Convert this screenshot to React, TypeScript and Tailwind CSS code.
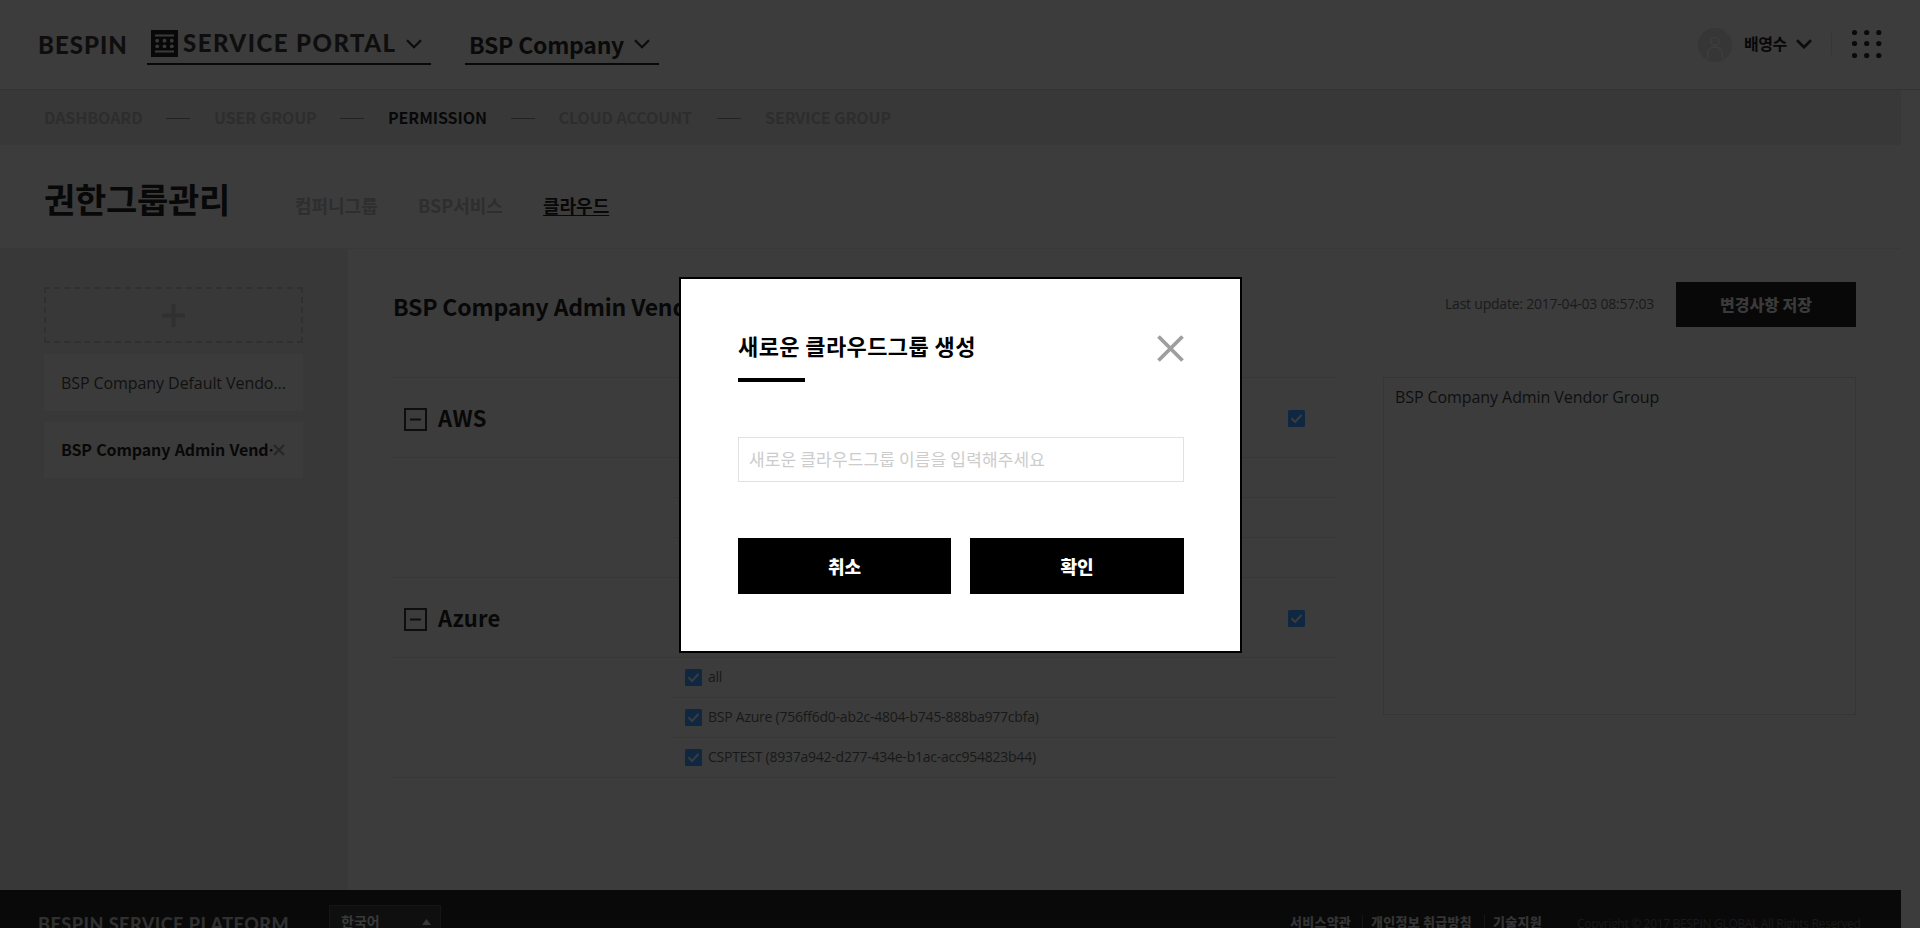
import React from "react";

const KR = "font-['Noto_Sans_CJK_KR',sans-serif]";
const OPEN = "font-['Open_Sans','Noto_Sans_CJK_KR',sans-serif]";

function Chevron({ className, w = 2.2 }: { className?: string; w?: number }) {
  return (
    <svg className={className} width="16" height="10" viewBox="0 0 16 10" fill="none" stroke="#0c0c0c" strokeWidth={w}>
      <path d="M1 1.2 L8 8.2 L15 1.2" />
    </svg>
  );
}

function Check({ className = "" }: { className?: string }) {
  return (
    <svg className={`shrink-0 ${className}`} width="17" height="17" viewBox="0 0 17 17" fill="none">
      <rect width="17" height="17" rx="1.5" fill="#0f2740" />
      <path d="M3.5 8.3 L7 12 L13.5 5" stroke="#3c3c3c" strokeWidth="2" />
    </svg>
  );
}

function Minus() {
  return (
    <svg className="shrink-0" width="23" height="23" viewBox="0 0 23 23" fill="none" stroke="#0e0e0e" strokeWidth="2">
      <rect x="1" y="1" width="21" height="21" />
      <path d="M6 11.5 H17" />
    </svg>
  );
}

function PortalIcon() {
  return (
    <svg width="27" height="27" viewBox="0 0 27 27">
      <rect width="27" height="27" fill="#080808" />
      <path d="M4 5.5 H23 M4 21.5 H23" stroke="#3a3a3a" strokeWidth="1.8" />
      {[10.7, 16.3].map((y) => [6.2, 13.5, 20.8].map((x) => <circle key={`${x}-${y}`} cx={x} cy={y} r="1.9" fill="#3a3a3a" />))}
    </svg>
  );
}

const NAV = [
  { label: "DASHBOARD", width: "w-[98px]" },
  { label: "USER GROUP", width: "w-[102px]" },
  { label: "PERMISSION", width: "w-[98.5px]" },
  { label: "CLOUD ACCOUNT", width: "w-[134.5px]" },
  { label: "SERVICE GROUP", width: "w-[126px]" },
];

const VENDORS = [
  { name: "AWS", rows: ["", "", ""] },
  {
    name: "Azure",
    rows: ["all", "BSP Azure (756ff6d0-ab2c-4804-b745-888ba977cbfa)", "CSPTEST (8937a942-d277-434e-b1ac-acc954823b44)"],
  },
];

function Header() {
  return (
    <header className="flex h-[90px] shrink-0 items-start border-b border-[#333333] pl-[38px]">
      <div className="mt-[31px] w-[109px] font-[Lato] text-[24px] leading-[28px] font-black tracking-[1px] whitespace-nowrap text-[#0e0e0e]">BESPIN</div>
      <div className="flex h-[65px] w-[284px] items-start border-b-2 border-[#080808] pl-1">
        <div className="mt-[30px] w-[32px]"><PortalIcon /></div>
        <div className="mt-[29px] w-[223px] font-[Lato] text-[24px] leading-[28px] font-black tracking-[1.45px] whitespace-nowrap text-[#0e0e0e]">SERVICE PORTAL</div>
        <Chevron className="mt-[39px]" />
      </div>
      <div className="ml-[34px] flex h-[65px] w-[194px] items-start border-b-2 border-[#080808] pl-[4px]">
        <div className={`mt-[27px] w-[165px] text-[23px] leading-[34px] font-bold tracking-[-0.25px] whitespace-nowrap text-[#0a0a0a] ${KR}`}>BSP Company</div>
        <Chevron className="mt-[39px]" />
      </div>
      <div className="ml-auto flex items-start">
        <svg className="mt-[28px]" width="34" height="34" viewBox="0 0 34 34" fill="none">
          <circle cx="17" cy="17" r="17" fill="#363636" />
          <circle cx="17" cy="13.5" r="4" stroke="#3e3e3e" strokeWidth="1.5" />
          <path d="M9.5 31 V27 C9.5 21 13 19 17 19 C21 19 24.500 21 24.500 27 V31" stroke="#3e3e3e" strokeWidth="1.5" />
        </svg>
        <div className={`mt-[31px] ml-[12px] w-[52px] text-[16px] leading-[24px] font-bold tracking-[-0.5px] whitespace-nowrap text-[#080808] ${KR}`}>배영수</div>
        <Chevron className="mt-[39px]" w={2.7} />
        <div className="mt-[33px] ml-[19px] h-[22px] w-px bg-[#353535]" />
        <svg className="mt-[28px] mr-[36px] ml-[20px]" width="32" height="32" viewBox="0 0 32 32" fill="#0a0a0a">
          {[4.5, 15.500, 27.500].map((y) => [2.5, 14.700, 26.800].map((x) => <circle key={`${x}-${y}`} cx={x} cy={y} r="2.6" />))}
        </svg>
      </div>
    </header>
  );
}

function Nav() {
  return (
    <nav className={`flex h-[55px] shrink-0 items-center gap-6 bg-[#383838] pt-px pl-[44px] text-[16px] leading-[24px] font-bold tracking-[-0.08px] ${KR}`}>
      {NAV.map((n, i) => (
        <React.Fragment key={n.label}>
          {i > 0 && <span className="h-px w-6 bg-[#222222]" />}
          <span className={`-mt-[2px] ${n.width} whitespace-nowrap ${n.label === "PERMISSION" ? "text-[#080808]" : "text-[#2d2d2d]"}`}>{n.label}</span>
        </React.Fragment>
      ))}
    </nav>
  );
}

function Sidebar() {
  return (
    <aside className="flex w-[348px] shrink-0 flex-col bg-[#383838] pt-[38px] pl-[44px]">
      <div className="flex h-[56px] w-[259px] items-center justify-center border-2 border-dashed border-[#303030]">
        <svg width="23" height="23" viewBox="0 0 23 23" stroke="#303030" strokeWidth="4"><path d="M11.500 0 V23 M0 11.500 H23" /></svg>
      </div>
      <div className={`mt-[11px] flex h-[57px] w-[259px] items-center bg-[#3b3b3b] pl-[17px] text-[16px] tracking-[-0.08px] whitespace-nowrap text-[#111111] ${OPEN}`}>BSP Company Default Vendo...</div>
      <div className={`mt-[11px] flex h-[56px] w-[259px] items-center bg-[#3b3b3b] pl-[17px] text-[16px] font-bold whitespace-nowrap text-[#080808] ${KR}`}>
        <span className="-mt-[2px] w-[212px] tracking-[-0.12px]" lang="ko">BSP Company Admin Vend…</span>
        <svg className="relative bg-[#3b3b3b]" width="12" height="12" viewBox="0 0 12 12" stroke="#262626" strokeWidth="2"><path d="M1 1 L11 11 M11 1 L1 11" /></svg>
      </div>
    </aside>
  );
}

function Content() {
  return (
    <main className="flex flex-1 flex-col pr-[45px] pl-[45px]">
      <div className="flex h-[128px] items-start">
        <h2 className={`mt-[40px] text-[23px] leading-[34px] font-bold tracking-[-0.2px] whitespace-nowrap text-[#080808] ${KR}`}>BSP Company Admin Vendor Group</h2>
        <div className={`mt-[45px] ml-auto w-[231px] text-[14px] leading-[20px] tracking-[-0.22px] whitespace-nowrap text-[#1a1a1a] ${OPEN}`}>Last update: 2017-04-03 08:57:03</div>
        <button className={`mt-[33px] h-[45px] w-[180px] bg-[#080808] pb-[2px] text-[16px] font-black text-[#3a3a3a] ${KR}`}>변경사항 저장</button>
      </div>
      <div className="flex items-start justify-between">
        <div className="w-[944px] border-t border-[#373737]">
          {VENDORS.map((v) => (
            <section key={v.name}>
              <div className="flex h-[80px] items-center border-b border-[#373737] pl-[11px]">
                <div className="mt-[3px]"><Minus /></div>
                <h3 className={`-mt-[2px] ml-[11px] text-[22px] leading-[34px] font-bold tracking-[0.3px] text-[#080808] ${KR}`}>{v.name}</h3>
                <Check className="mt-[2px] mr-[32px] ml-auto" />
              </div>
              <div className="border-b border-[#373737] pl-[281px]">
                {v.rows.map((r, i) => (
                  <div key={i} className={`flex items-center pl-[11px] text-[14px] tracking-[-0.24px] whitespace-nowrap text-[#181818] ${OPEN} ${i < 2 ? "h-[40px] border-b border-[#373737]" : "h-[39px]"}`}>
                    <Check />
                    <span className="-mt-[2px] ml-[6px]">{r}</span>
                  </div>
                ))}
              </div>
            </section>
          ))}
        </div>
        <div className={`h-[338px] w-[473px] border border-[#353535] px-[11px] pt-[6px] text-[16px] leading-[26px] tracking-[-0.08px] text-[#0f0f0f] ${OPEN}`}>BSP Company Admin Vendor Group</div>
      </div>
    </main>
  );
}

function Footer() {
  return (
    <footer className="flex h-[38px] w-[1901px] shrink-0 items-start overflow-hidden bg-[#090909] pl-[38px]">
      <div className="mt-[22px] w-[291px] font-[Lato] text-[18px] leading-[24px] font-black tracking-[0.5px] whitespace-nowrap text-[#303030]">BESPIN SERVICE PLATFORM</div>
      <div className={`mt-[15px] flex h-[34px] w-[112px] items-center justify-between border border-[#151515] bg-[#0f0f0f] pr-[9px] pl-[11px] text-[14px] font-bold text-[#3a3a3a] ${KR}`}>
        <span className="-mt-[2px]">한국어</span>
        <svg width="9" height="6" viewBox="0 0 9 6" fill="#363636"><path d="M4.500 0 L9 6 H0 Z" /></svg>
      </div>
      <div className={`mt-[21px] ml-auto flex items-center text-[13px] leading-[22px] font-black tracking-[0.25px] whitespace-nowrap text-[#343434] ${KR}`}>
        <span className="w-[72px]">서비스약관</span>
        <span className="mr-[8px] h-[14px] w-px bg-[#161616]" />
        <span className="w-[113px]">개인정보 취급방침</span>
        <span className="mr-[8px] h-[14px] w-px bg-[#161616]" />
        <span className="w-[84px]">기술지원</span>
      </div>
      <div className={`mt-[24px] w-[324px] text-[12px] leading-[20px] tracking-[-0.32px] whitespace-nowrap text-[#1a1a1a] ${OPEN}`}>Copyright © 2017 BESPIN GLOBAL All Rights Reserved</div>
    </footer>
  );
}

function Modal() {
  return (
    <div className="absolute top-[277px] left-[679px] flex h-[376px] w-[563px] flex-col border-2 border-black bg-white pt-[50px] pr-[56px] pl-[57px]">
      <div className="flex h-[49px] items-start justify-between">
        <h1 className={`text-[22px] leading-[32px] font-bold tracking-[0.4px] whitespace-nowrap text-black ${KR}`}>새로운 클라우드그룹 생성</h1>
        <svg className="mt-[6px]" width="27" height="27" viewBox="0 0 27 27" stroke="#9e9e9e" strokeWidth="3.8"><path d="M1.500 1.500 L25.500 25.500 M25.500 1.500 L1.500 25.500" /></svg>
      </div>
      <div className="h-[4px] w-[67px] bg-black" />
      <div className={`mt-[55px] flex h-[45px] shrink-0 items-center border border-[#e1e1e1] pb-[2px] pl-[10px] text-[17px] tracking-[0.15px] text-[#cccccc] ${KR}`}>새로운 클라우드그룹 이름을 입력해주세요</div>
      <div className={`mt-[56px] flex gap-[19px] text-[18px] font-black text-white ${KR}`}>
        <button className="h-[56px] w-[213px] bg-black">취소</button>
        <button className="h-[56px] w-[214px] bg-black">확인</button>
      </div>
    </div>
  );
}

export default function App() {
  return (
    <div className="relative flex h-[928px] w-[1920px] flex-col overflow-hidden bg-[#3c3c3c]">
      <Header />
      <div className="flex w-[1901px] flex-1 flex-col">
        <Nav />
        <div className={`flex h-[104px] shrink-0 items-start border-b border-[#383838] pl-[44px] ${KR}`}>
          <h1 className="mt-[29px] w-[251px] text-[34px] leading-[50px] font-bold tracking-[-0.3px] whitespace-nowrap text-[#080808]">권한그룹관리</h1>
          <div className="mt-[47px] flex text-[18px] leading-[26px] font-bold whitespace-nowrap text-[#2e2e2e]">
            <span className="w-[123px]">컴퍼니그룹</span>
            <span className="w-[125px]">BSP서비스</span>
            <span className="text-[#080808] underline decoration-1 underline-offset-2">클라우드</span>
          </div>
        </div>
        <div className="flex flex-1">
          <Sidebar />
          <Content />
        </div>
      </div>
      <Footer />
      <Modal />
    </div>
  );
}
